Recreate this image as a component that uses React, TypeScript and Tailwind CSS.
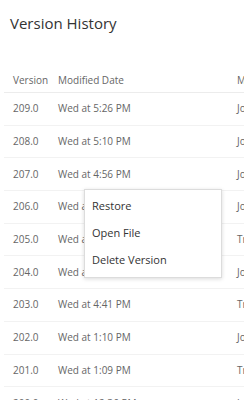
import React from "react";

const rows = [
  { v: "209.0", d: "Wed at 5:26 PM", m: "John Smith" },
  { v: "208.0", d: "Wed at 5:10 PM", m: "John Smith" },
  { v: "207.0", d: "Wed at 4:56 PM", m: "John Smith" },
  { v: "206.0", d: "Wed at 4:52 PM", m: "John Smith" },
  { v: "205.0", d: "Wed at 4:49 PM", m: "Tracy Lee" },
  { v: "204.0", d: "Wed at 4:42 PM", m: "John Smith" },
  { v: "203.0", d: "Wed at 4:41 PM", m: "Tracy Lee" },
  { v: "202.0", d: "Wed at 1:10 PM", m: "John Smith" },
  { v: "201.0", d: "Wed at 1:09 PM", m: "Tracy Lee" },
  { v: "200.0", d: "Wed at 12:36 PM", m: "John Smith" },
];

export default function App() {
  return (
    <div
      className="relative w-[244px] h-[400px] overflow-hidden bg-white text-[#666]"
      style={{ fontFamily: '"Open Sans", "Noto Sans", sans-serif' }}
    >
      <div className="pl-[10px] pt-[12px] h-[60px] text-[15px] leading-[22px] text-[#333]">
        Version History
      </div>
      <div className="ml-[4px] w-[400px] text-[10px]">
        <div className="flex items-center h-[33px] pt-[8px] border-b border-[#ececec]">
          <div className="w-[54px] pl-[9px]">Version</div>
          <div className="w-[179px]">Modified Date</div>
          <div className="whitespace-nowrap">Modified By</div>
        </div>
        {rows.map((r) => (
          <div
            key={r.v}
            className="flex items-center h-[32.7px] border-b border-[#f2f2f2]"
          >
            <div className="w-[54px] pl-[9px]">{r.v}</div>
            <div className="w-[179px]">{r.d}</div>
            <div className="whitespace-nowrap">{r.m}</div>
          </div>
        ))}
      </div>
      <div className="absolute left-[84px] top-[189px] w-[138px] py-[3px] bg-white border border-[#dcdcdc] shadow-[0_1px_4px_rgba(0,0,0,0.15)] text-[11px] text-[#333]">
        <div className="h-[27px] flex items-center pl-[7px]">Restore</div>
        <div className="h-[27px] flex items-center pl-[7px]">Open File</div>
        <div className="h-[27px] flex items-center pl-[7px]">Delete Version</div>
      </div>
    </div>
  );
}
